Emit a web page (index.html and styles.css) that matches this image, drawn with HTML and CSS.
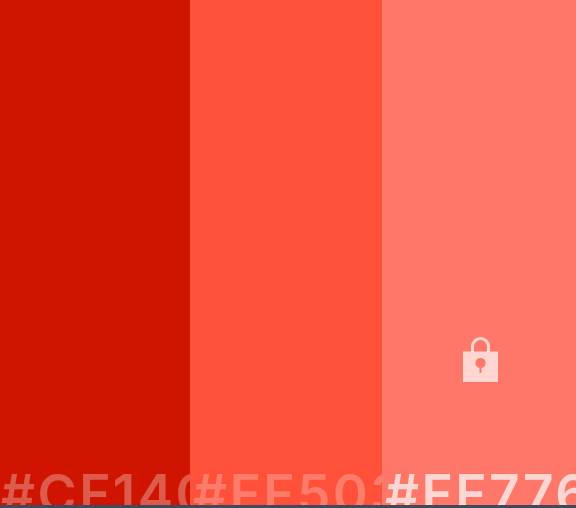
FILE: index.html
```html
<!DOCTYPE html>
<html>
<head>
	<title>Palette</title>
	<link rel="stylesheet" href="styles.css">
</head>
<body>
	<div class="palette">
		<div class="swatch swatch-dark">
			<div class="hex">#CF1400</div>
		</div>
		<div class="swatch swatch-mid">
			<div class="hex">#FF5039</div>
		</div>
		<div class="swatch swatch-light">
			<svg class="lock" viewBox="0 0 35 45" width="35" height="45">
				<path fill="none" stroke="currentColor" stroke-width="3" d="M9.500 15V9.500A8 8 0 0 1 25.500 9.500V15"/>
				<path fill="currentColor" fill-rule="evenodd" d="M0 14.500H35V45H0ZM17.500 21A5 5 0 0 0 16.500 30.900V36H18.500V30.900A5 5 0 0 0 17.500 21Z"/>
			</svg>
			<div class="hex">#FF7769</div>
		</div>
	</div>
	<div class="bottom-bar"></div>
</body>
</html>
```

FILE: styles.css
```css
html, body {
	margin: 0;
	height: 100%;
}
body {
	display: flex;
	flex-direction: column;
	overflow: hidden;
	font-family: Inter, "Open Sans", sans-serif;
}
.palette {
	display: grid;
	grid-template-columns: 190px 192px 1fr;
	flex: 1;
	min-height: 0;
}
.swatch {
	display: flex;
	flex-direction: column;
	justify-content: flex-end;
	align-items: center;
	overflow: hidden;
}
.swatch-dark {
	background-color: #CF1400;
	color: rgba(255, 255, 255, 0.3);
}
.swatch-mid {
	background-color: #FF5039;
	color: rgba(255, 255, 255, 0.25);
}
.swatch-light {
	background-color: #FF7769;
	color: rgba(255, 255, 255, 0.7);
}
.lock {
	margin-bottom: 86px;
	margin-left: 3px;
	flex: none;
}
.hex {
	align-self: stretch;
	height: 37px;
	padding-left: 3px;
	font-size: 53px;
	font-weight: 600;
	line-height: 52px;
	letter-spacing: 2.500px;
	white-space: nowrap;
}
.swatch-dark .hex {
	padding-left: 1px;
}
.bottom-bar {
	height: 3px;
	background-color: #3F4A5C;
}
```
